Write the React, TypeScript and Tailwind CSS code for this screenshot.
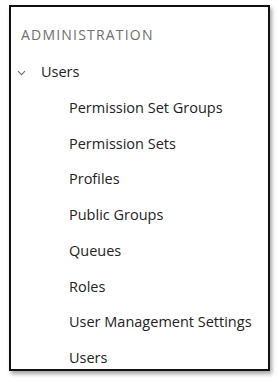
const items = [
  'Permission Set Groups',
  'Permission Sets',
  'Profiles',
  'Public Groups',
  'Queues',
  'Roles',
  'User Management Settings',
  'Users',
];

export default function App() {
  return (
    <div className="w-[279px] h-[384px] bg-white pt-[5px] pl-[9px]">
      <div
        className="w-[261px] h-[366px] border-[2.5px] border-[#111] bg-white shadow-[2px_3px_4px_rgba(0,0,0,0.35)] text-[14.5px] leading-none"
        style={{ fontFamily: '"Open Sans", "Noto Sans", sans-serif' }}
      >
        <div className="pl-[10px] pt-[21px] text-[14px] tracking-[1.2px] text-[#706e6b]">ADMINISTRATION</div>
        <div className="flex items-center pt-[23px] text-[#222]">
          <svg width="9" height="6" viewBox="0 0 9 6" className="ml-[6px] mr-[15px] mt-[2px]">
            <path d="M1 1.2l3.5 3.5 3.5-3.5" fill="none" stroke="#706e6b" strokeWidth="1.1" />
          </svg>
          <span>Users</span>
        </div>
        <ul className="pl-[58px] pt-[11px] text-[#222]">
          {items.map((item) => (
            <li key={item} className="h-[35.7px] flex items-center">
              {item}
            </li>
          ))}
        </ul>
      </div>
    </div>
  );
}
